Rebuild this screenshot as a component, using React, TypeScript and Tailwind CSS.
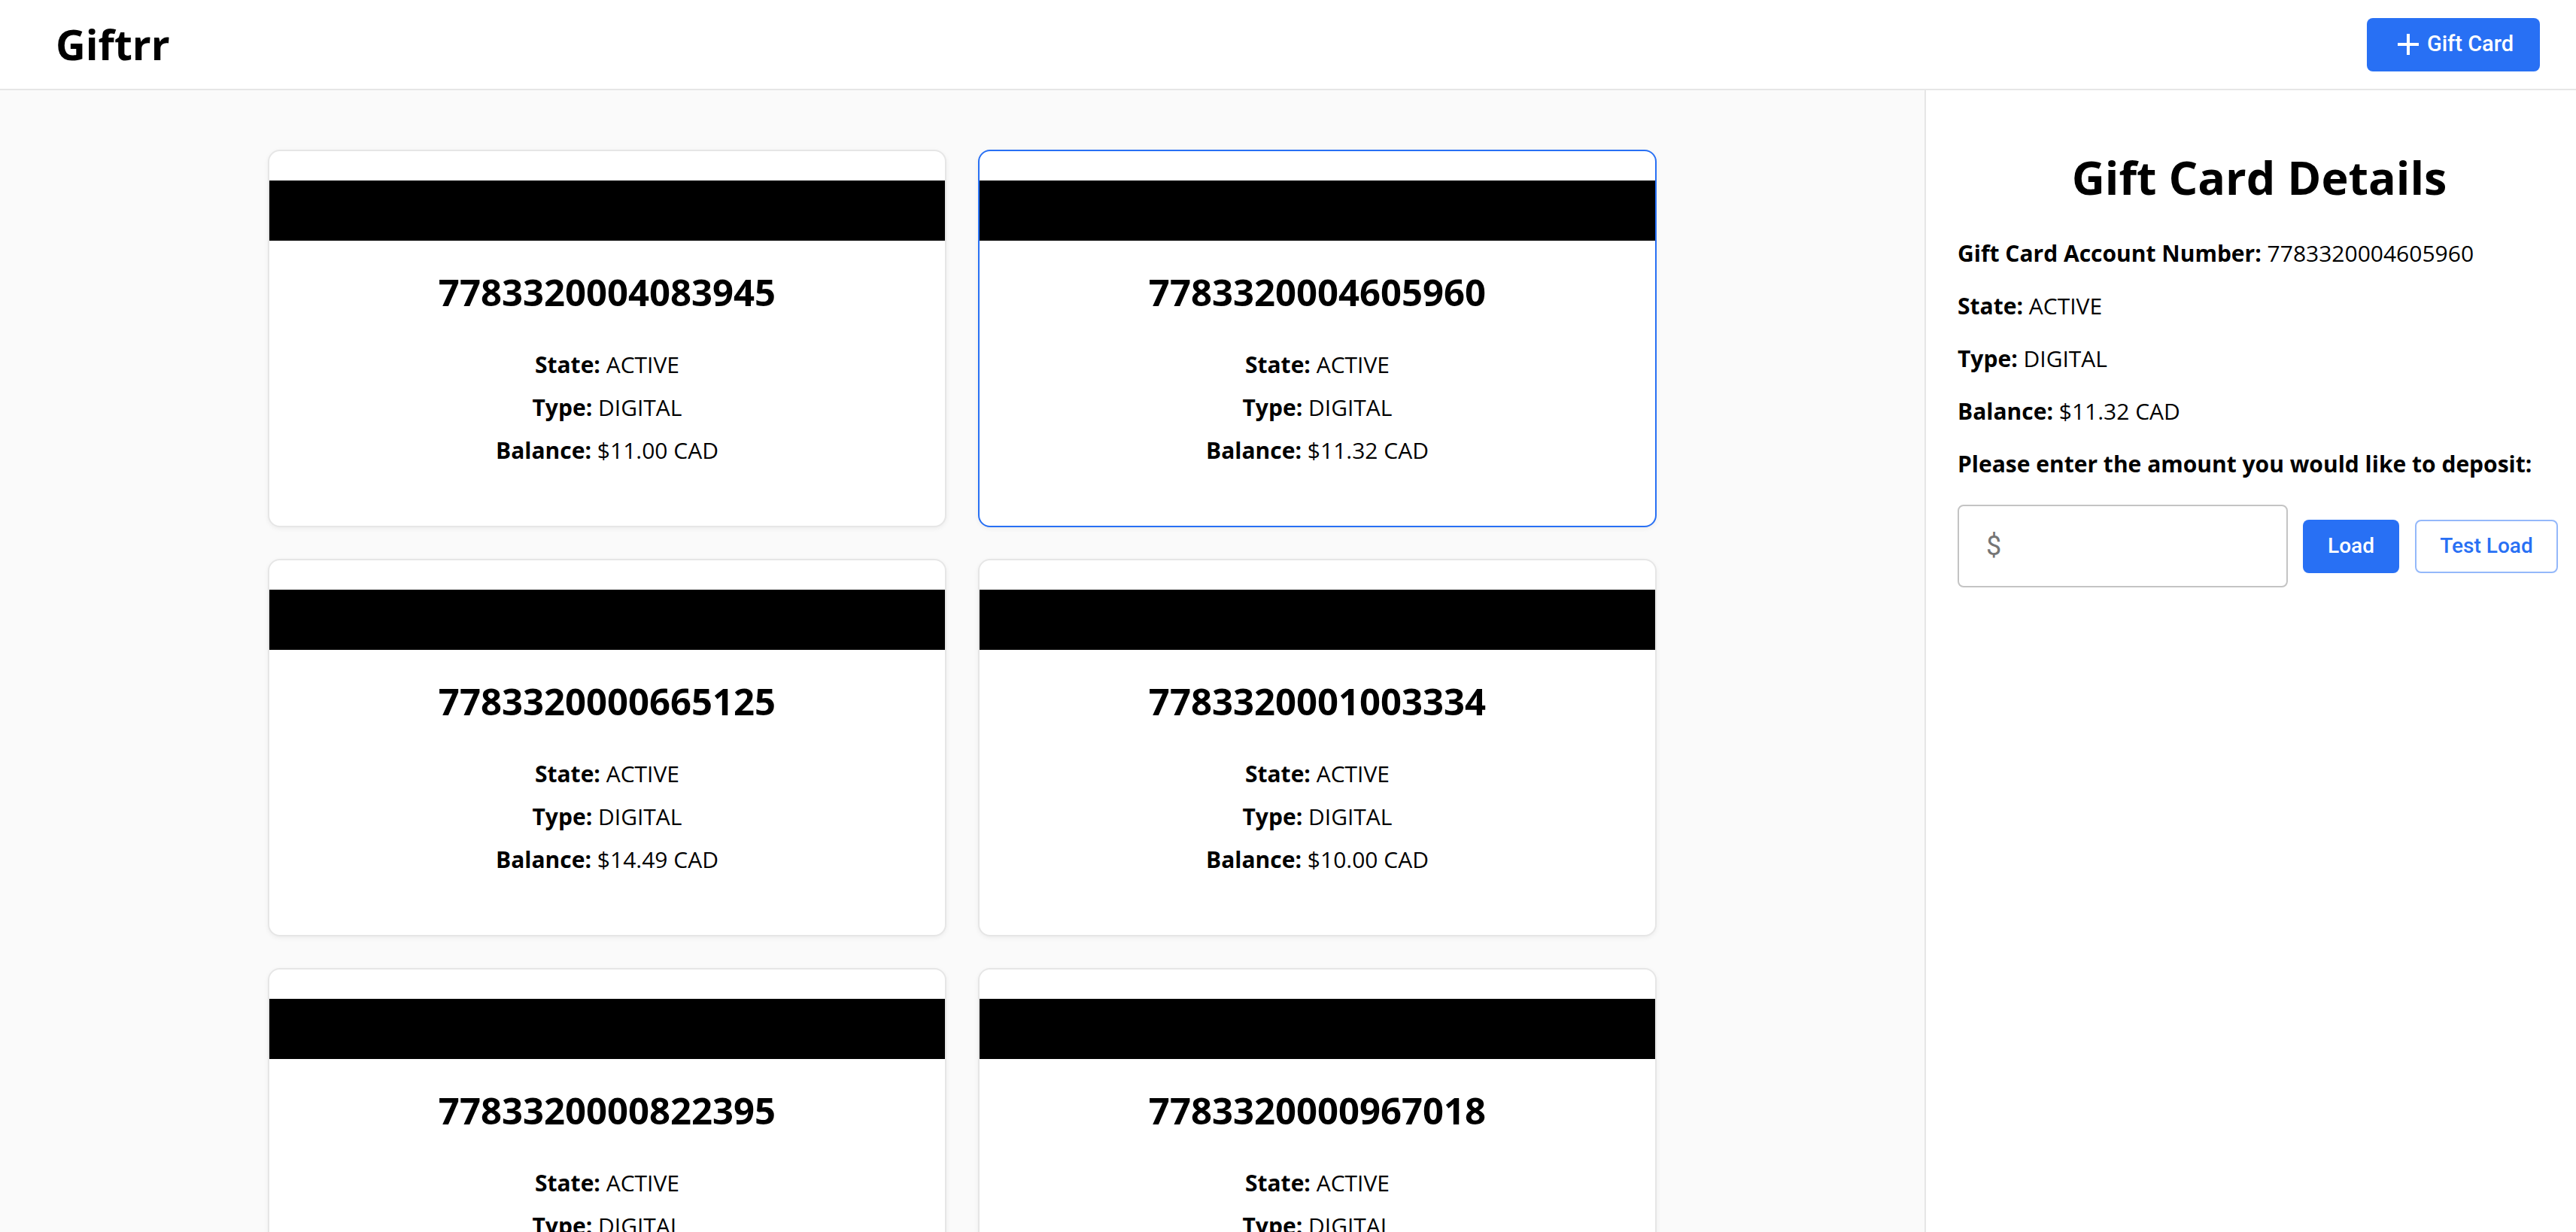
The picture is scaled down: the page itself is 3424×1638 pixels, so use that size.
import React, { useState } from 'react';

interface GiftCard {
  number: string;
  state: string;
  type: string;
  balance: string;
}

const cards: GiftCard[] = [
  { number: '7783320004083945', state: 'ACTIVE', type: 'DIGITAL', balance: '$11.00 CAD' },
  { number: '7783320004605960', state: 'ACTIVE', type: 'DIGITAL', balance: '$11.32 CAD' },
  { number: '7783320000665125', state: 'ACTIVE', type: 'DIGITAL', balance: '$14.49 CAD' },
  { number: '7783320001003334', state: 'ACTIVE', type: 'DIGITAL', balance: '$10.00 CAD' },
  { number: '7783320000822395', state: 'ACTIVE', type: 'DIGITAL', balance: '$10.00 CAD' },
  { number: '7783320000967018', state: 'ACTIVE', type: 'DIGITAL', balance: '$10.00 CAD' },
];

const textFont = "font-['Open_Sans','Noto_Sans',sans-serif]";
const buttonFont = "font-['Roboto','Noto_Sans',sans-serif]";

const PlusIcon = () => (
  <svg width="28" height="28" viewBox="0 0 28 28" fill="none">
    <path d="M0 14h28M14 0v28" stroke="currentColor" strokeWidth="4" />
  </svg>
);

const CardTile: React.FC<{ card: GiftCard; selected: boolean; onSelect: () => void }> = ({ card, selected, onSelect }) => (
  <div
    onClick={onSelect}
    className={`flex flex-col overflow-hidden rounded-[16px] border-2 bg-white cursor-pointer shadow-[0_2px_6px_rgba(0,0,0,0.06)] ${
      selected ? 'border-[#2870f4]' : 'border-[#e6e6e6]'
    }`}
  >
    {/* magnetic strip */}
    <div className="mt-[39px] h-[80px] bg-black" />
    <h2 className="mt-[40px] text-center text-[49px] leading-[56px] font-bold text-black">{card.number}</h2>
    <div className="mt-[40px] mb-[72px] flex flex-col items-center text-[30px] leading-[57px] text-black">
      <p><span className="font-bold">State:</span> {card.state}</p>
      <p><span className="font-bold">Type:</span> {card.type}</p>
      <p><span className="font-bold">Balance:</span> {card.balance}</p>
    </div>
  </div>
);

export default function App() {
  const [selected, setSelected] = useState(1);
  const [amount, setAmount] = useState('');
  const card = cards[selected];

  return (
    <div className={`min-h-screen flex flex-col bg-white ${textFont}`}>
      <header className="h-[120px] shrink-0 flex items-center justify-between border-b-2 border-[#e6e6e6] bg-white pl-[74px] pr-[48px]">
        <h1 className="text-[55px] leading-[72px] font-bold text-black">Giftrr</h1>
        <button
          className={`h-[71px] w-[230px] flex items-center justify-center gap-[11px] pl-[6px] rounded-[8px] bg-[#2870f4] text-white text-[29px] font-medium ${buttonFont}`}
        >
          <PlusIcon />
          <span>Gift Card</span>
        </button>
      </header>

      <div className="flex flex-1">
        <main className="flex-1 bg-[#fafafa] pt-[79px] pb-[80px]">
          <div className="mx-auto w-[1846px] grid grid-cols-2 gap-[42px]">
            {cards.map((c, i) => (
              <CardTile key={c.number} card={c} selected={i === selected} onSelect={() => setSelected(i)} />
            ))}
          </div>
        </main>

        <aside className="w-[866px] shrink-0 border-l-2 border-[#e6e6e6] bg-white pt-[80px] pl-[42px]">
          <h2 className="text-center pr-[20px] text-[61px] leading-[72px] font-bold text-black">Gift Card Details</h2>
          <div className="mt-[45px] flex flex-col gap-[30px] text-[30px] leading-[40px] text-black">
            <p><span className="font-bold">Gift Card Account Number:</span> {card.number}</p>
            <p><span className="font-bold">State:</span> {card.state}</p>
            <p><span className="font-bold">Type:</span> {card.type}</p>
            <p><span className="font-bold">Balance:</span> {card.balance}</p>
            <p className="font-bold">Please enter the amount you would like to deposit:</p>
          </div>
          <div className="mt-[34px] flex items-center">
            <div className="h-[110px] w-[439px] flex items-center rounded-[8px] border-2 border-[#c4c4c4] pl-[36px]">
              <span className={`text-[36px] text-[#757575] ${buttonFont}`}>$</span>
              <input
                value={amount}
                onChange={(e) => setAmount(e.target.value)}
                className={`ml-[8px] flex-1 min-w-0 bg-transparent text-[32px] outline-none ${buttonFont}`}
              />
            </div>
            <button
              className={`ml-[20px] h-[71px] w-[128px] rounded-[8px] bg-[#2870f4] text-white text-[28px] font-medium ${buttonFont}`}
            >
              Load
            </button>
            <button
              className={`ml-[21px] h-[71px] w-[190px] rounded-[8px] border-2 border-[#94b8fa] bg-white text-[#2870f4] text-[28px] font-medium ${buttonFont}`}
            >
              Test Load
            </button>
          </div>
        </aside>
      </div>
    </div>
  );
}
